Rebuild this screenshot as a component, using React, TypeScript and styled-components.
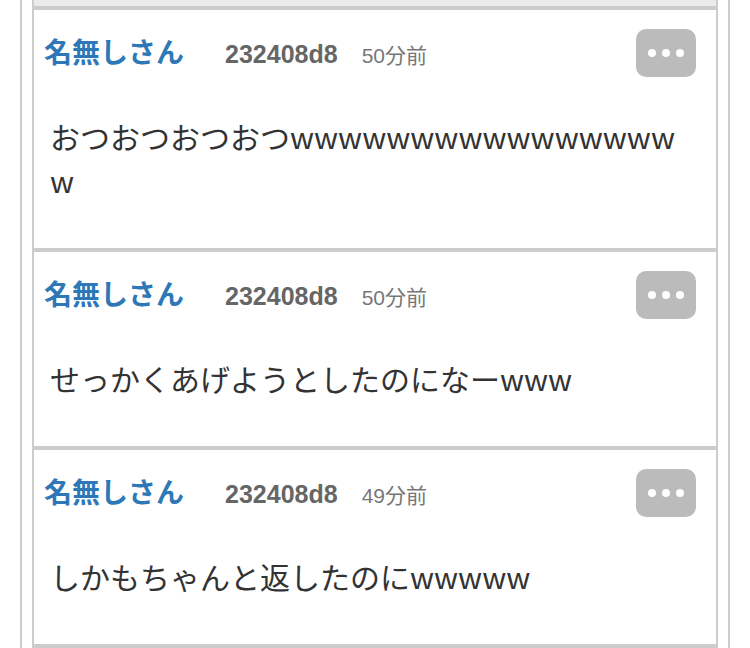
import React from "react";
import styled, { createGlobalStyle } from "styled-components";

const GlobalStyle = createGlobalStyle`
    html, body {
        margin: 0;
        padding: 0;
        background-color: #fff;
        overflow: hidden;
    }
`;

const Thread = styled.div`
    margin-left: 20px;
    width: 686px;
    height: 648px;
    padding: 0 10px;
    border-left: 2px solid #cccccc;
    border-right: 2px solid #cccccc;
    box-sizing: content-box;
    overflow: hidden;
`;

interface PostCardProps {
    isPrev?: Boolean;
    isStub?: Boolean;
}

const PostCard = styled.div<PostCardProps>`
    border: 2px solid #cccccc;
    border-top: ${(props) => (props.isPrev ? "none" : "2px solid #cccccc")};
    border-bottom: ${(props) => (props.isStub ? "none" : "2px solid #cccccc")};
    background-color: ${(props) => (props.isPrev ? "#ebebea" : "#fff")};
    height: ${(props) => (props.isPrev ? "6px" : props.isStub ? "10px" : "auto")};
`;

const PostHeader = styled.div`
    display: flex;
    align-items: flex-start;
    padding: 19px 20px 0 10px;
    height: 48px;
`;

const MetaGroup = styled.div`
    display: flex;
    align-items: baseline;
    height: 48px;
`;

const UserName = styled.span`
    font-family: "Noto Sans CJK JP", sans-serif;
    font-weight: 700;
    font-size: 28px;
    line-height: 44px;
    color: #2e78b7;
`;

const UserId = styled.span`
    font-family: "Liberation Sans", Arial, sans-serif;
    font-weight: 700;
    font-size: 25px;
    color: #666666;
    margin-left: 41px;
`;

const PostTime = styled.span`
    font-family: "Liberation Sans", "Noto Sans CJK JP", sans-serif;
    font-size: 21px;
    color: #777777;
    margin-left: 24px;
`;

const MenuButton = styled.div`
    margin-left: auto;
    width: 60px;
    height: 48px;
    border-radius: 10px;
    background-color: #bbbbbb;
    display: flex;
    align-items: center;
    justify-content: center;
    gap: 6px;
    cursor: pointer;
`;

const Dot = styled.span`
    width: 8px;
    height: 8px;
    border-radius: 50%;
    background-color: #fff;
`;

const PostBody = styled.div`
    padding: 37px 24px 46px 16px;
    font-family: "Noto Sans CJK JP", sans-serif;
    font-size: 30px;
    line-height: 44px;
    color: #333333;
    word-break: break-all;
`;

interface IPost {
    name: string;
    id: string;
    time: string;
    body: string;
}

const posts: IPost[] = [
    { name: "名無しさん", id: "232408d8", time: "50分前", body: "おつおつおつおつwwwwwwwwwwwwwwwww" },
    { name: "名無しさん", id: "232408d8", time: "50分前", body: "せっかくあげようとしたのになーwww" },
    { name: "名無しさん", id: "232408d8", time: "49分前", body: "しかもちゃんと返したのにwwwww" },
];

const App: React.FC = () => {
    return (
        <>
            <GlobalStyle />
            <Thread>
                <PostCard isPrev />
                {posts.map((post, i) => {
                    return (
                        <PostCard key={i}>
                            <PostHeader>
                                <MetaGroup>
                                    <UserName>{post.name}</UserName>
                                    <UserId>{post.id}</UserId>
                                    <PostTime>{post.time}</PostTime>
                                </MetaGroup>
                                <MenuButton>
                                    <Dot />
                                    <Dot />
                                    <Dot />
                                </MenuButton>
                            </PostHeader>
                            <PostBody>{post.body}</PostBody>
                        </PostCard>
                    );
                })}
                <PostCard isStub />
            </Thread>
        </>
    );
};

export default App;
